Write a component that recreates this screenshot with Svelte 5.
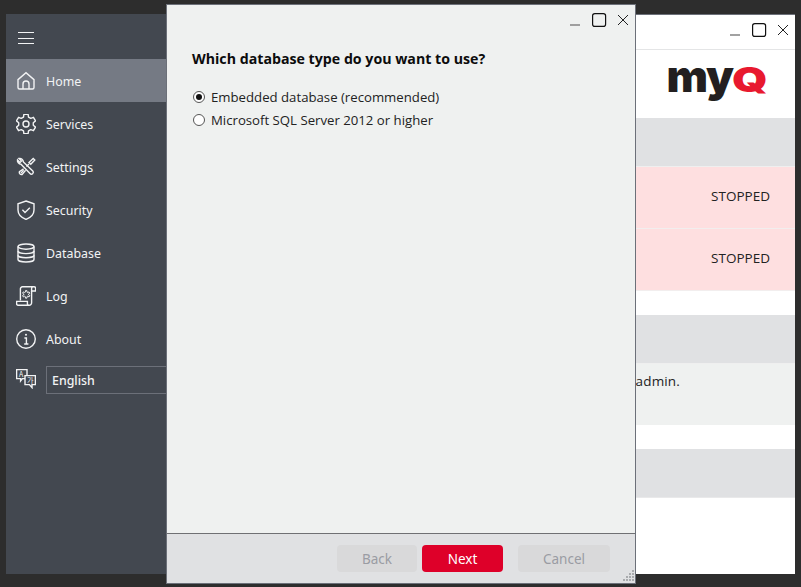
<script>
  const navItems = ['Home', 'Services', 'Settings', 'Security', 'Database', 'Log', 'About'];

  function gearPath(cx, cy, outer, inner, teeth) {
    const pts = [];
    const step = (Math.PI * 2) / teeth;
    for (let i = 0; i < teeth; i++) {
      const a = i * step - Math.PI / 2;
      const hw = step * 0.2;
      const valley = step * 0.33;
      const p = (r, t) => `${(cx + r * Math.cos(t)).toFixed(2)} ${(cy + r * Math.sin(t)).toFixed(2)}`;
      pts.push(p(inner, a - valley), p(outer, a - hw), p(outer, a + hw), p(inner, a + valley));
    }
    return 'M' + pts.join(' L') + ' Z';
  }
  const bigGear = gearPath(10, 10, 10, 7.4, 6);
  const smallGear = gearPath(10.2, 8.4, 3.8, 2.4, 6);
  const grip = [[10,0],[10,3],[7,3],[10,6],[7,6],[4,6],[10,9],[7,9],[4,9],[1,9]];
</script>

{#snippet windowControls()}
  <svg class="controls" viewBox="0 0 58 14" width="58" height="14" aria-hidden="true">
    <path d="M0 12H10" stroke="#8b8b8b" stroke-width="1.6" fill="none" />
    <rect x="22.6" y="0.6" width="13" height="12.8" rx="2.2" fill="none" stroke="#111" stroke-width="1.2" />
    <path d="M48 2L58 12M58 2L48 12" stroke="#222" stroke-width="1" fill="none" />
  </svg>
{/snippet}

{#snippet navIcon(name)}
  <svg class="icon" viewBox="0 0 20 20" width="20" height="20" aria-hidden="true">
    {#if name === 'Home'}
      <path d="M2 16.5V8.6L10 1.6L18 8.6V16.5A1.5 1.5 0 0 1 16.5 18H3.5A1.5 1.5 0 0 1 2 16.5Z" />
      <path d="M7 18V13A3 3 0 0 1 13 13V18" />
    {:else if name === 'Services'}
      <path d={bigGear} stroke-linejoin="round" />
      <circle cx="10" cy="10" r="3" />
    {:else if name === 'Settings'}
      <path d="M3 1.5L5.5 4L4 5.5L1.5 3A3.6 3.6 0 0 0 5 7.2L14 16.5A1.8 1.8 0 0 0 16.8 14L7.4 5A3.6 3.6 0 0 0 3 1.5Z" />
      <path d="M17.2 1.4L18.8 3L14.8 7.2L13 5.4Z" />
      <path d="M13 7L10.4 9.6M7.6 11.8L3.4 14.6A2.3 2.3 0 0 0 6 17.6L9.6 13.2" />
      <path d="M4.8 16.4L7.6 13.2" />
    {:else if name === 'Security'}
      <path d="M10 1L18 3.8V10C18 14.6 14.6 17.6 10 19.4C5.4 17.6 2 14.6 2 10V3.8Z" />
      <path d="M6.4 9.8L9 12.4L13.8 7.8" />
    {:else if name === 'Database'}
      <ellipse cx="10" cy="3.6" rx="8" ry="2.6" />
      <path d="M2 3.6V16.4C2 17.8 5.6 19 10 19S18 17.8 18 16.4V3.6" />
      <path d="M2 8C2 9.4 5.6 10.6 10 10.6S18 9.4 18 8" />
      <path d="M2 12.2C2 13.6 5.6 14.8 10 14.8S18 13.6 18 12.2" />
    {:else if name === 'Log'}
      <path d="M4.4 14.5V2.8A2 2 0 0 1 6.4 0.8H18A1.6 1.6 0 0 1 19.6 2.4V5H15.6V2.4A1.6 1.6 0 0 1 17.2 0.8" />
      <path d="M15.6 5V16.8A2.4 2.4 0 0 1 13.2 19.2H2A1.4 1.4 0 0 1 0.6 17.8V15.4H11.4V17.8A1.4 1.4 0 0 0 12.8 19.2" />
      <path d={smallGear} stroke-width="1" />
    {:else if name === 'About'}
      <circle cx="10" cy="10" r="9.3" />
      <circle class="solid" cx="10" cy="5.8" r="1" />
      <path d="M8.4 9H10.4V15M8.2 15H12.4" />
    {/if}
  </svg>
{/snippet}

<div class="desktop">
  <div class="app-window">
    <aside class="sidebar">
      <div class="burger" aria-hidden="true"><span></span><span></span><span></span></div>
      <nav>
        {#each navItems as item}
          <div class="nav-item" class:active={item === 'Home'}>
            {@render navIcon(item)}
            <span class="nav-label">{item}</span>
          </div>
        {/each}
      </nav>
      <div class="lang">
        <svg class="icon lang-icon" viewBox="0 0 20 20" width="20" height="20" aria-hidden="true">
          <path d="M0.6 0.6H11V9.6H6.4L4.6 12V9.6H0.6Z" />
          <path d="M9 6.6H19.4V15.6H16V18.6L13.4 15.6H9Z" class="filled" />
          <text x="3" y="7.6" class="tiny">A</text>
          <text x="11" y="13.6" class="tiny">가</text>
        </svg>
        <div class="select">English</div>
      </div>
    </aside>

    <main class="content">
      <div class="titlebar back-title">{@render windowControls()}</div>
      <div class="logo-row">
        <div class="logo"><span class="my">my</span><span class="q">Q</span></div>
      </div>
      <div class="row band"></div>
      <div class="row status"><span>STOPPED</span></div>
      <div class="row status"><span>STOPPED</span></div>
      <div class="spacer"></div>
      <div class="row band"></div>
      <div class="row note">/admin.</div>
      <div class="spacer"></div>
      <div class="row band last"></div>
    </main>
  </div>

  <section class="dialog">
    <div class="titlebar">{@render windowControls()}</div>
    <div class="dialog-body">
      <h1>Which database type do you want to use?</h1>
      <label class="radio"><span class="dot checked"></span>Embedded database (recommended)</label>
      <label class="radio"><span class="dot"></span>Microsoft SQL Server 2012 or higher</label>
    </div>
    <footer>
      <button class="btn back" disabled>Back</button>
      <button class="btn next">Next</button>
      <button class="btn cancel" disabled>Cancel</button>
      <svg class="grip" viewBox="0 0 12 12" width="12" height="12" aria-hidden="true">
        {#each grip as g}
          <rect x={g[0]} y={g[1]} width="2" height="2" fill="#a9abae" />
        {/each}
      </svg>
    </footer>
  </section>
</div>

<style>
  :global(body) {
    margin: 0;
    background: #2d2d2d;
  }
  .desktop {
    position: relative;
    width: 801px;
    height: 587px;
    overflow: hidden;
    background: #2d2d2d;
    font-family: "Open Sans", "Noto Sans", sans-serif;
  }
  .app-window {
    display: flex;
    box-sizing: border-box;
    width: 789px;
    height: 560px;
    margin-left: 6px;
    position: relative;
    top: 14px;
  }
  .sidebar {
    width: 160px;
    flex: none;
    background: #434850;
    color: #f2f3f4;
    font-family: "Noto Sans", "Open Sans", sans-serif;
    font-size: 12.4px;
    overflow: hidden;
  }
  .burger {
    height: 45px;
    display: flex;
    flex-direction: column;
    gap: 4.5px;
    padding: 18px 0 0 12px;
    box-sizing: border-box;
  }
  .burger span {
    display: block;
    width: 16px;
    height: 1px;
    background: #f2f3f4;
  }
  .nav-item {
    height: 43px;
    display: flex;
    align-items: center;
    gap: 10px;
    padding-left: 10px;
  }
  .nav-item.active {
    background: #757a84;
  }
  .nav-label {
    padding-top: 2px;
  }
  .icon {
    flex: none;
    fill: none;
    stroke: #f2f3f4;
    stroke-width: 1.4;
  }
  .icon .solid {
    fill: #f2f3f4;
    stroke: none;
  }
  .tiny {
    font-size: 7px;
    fill: #f2f3f4;
    stroke: none;
    font-family: "Noto Sans CJK KR", "Noto Sans", sans-serif;
  }
  .filled {
    fill: #434850;
  }
  .lang {
    display: flex;
    align-items: center;
    gap: 10px;
    padding-left: 10px;
    margin-top: 6px;
  }
  .lang-icon {
    margin-top: -3px;
  }
  .select {
    flex: 1;
    height: 28px;
    box-sizing: border-box;
    border: 1px solid #6c7079;
    padding-left: 5px;
    line-height: 28px;
    margin-right: -4px;
    font-weight: 500;
  }
  .content {
    flex: 1;
    background: #fff;
    border-top: 1px solid #6c7079;
    display: flex;
    flex-direction: column;
    font-size: 13.5px;
    color: #222;
  }
  .titlebar {
    height: 34px;
    box-sizing: border-box;
    padding: 8px 7px 0 0;
    display: flex;
    justify-content: flex-end;
  }
  .back-title {
    height: 35px;
    border-bottom: 1px solid #e4e5e6;
  }
  .controls {
    display: block;
  }
  .logo-row {
    height: 68px;
    display: flex;
    justify-content: flex-end;
    padding-right: 29px;
    box-sizing: border-box;
  }
  .logo {
    font-family: Inter, "Open Sans", sans-serif;
    font-weight: 900;
    line-height: 1;
    display: flex;
    align-items: baseline;
    height: 48px;
    padding-top: 4px;
  }
  .my {
    font-size: 44px;
    letter-spacing: -1px;
    color: #231f20;
  }
  .q {
    font-size: 34px;
    color: #e8192f;
    display: inline-block;
    transform: scaleX(1.33);
    transform-origin: left;
    width: 34px;
    margin-left: -1px;
  }
  .row {
    box-sizing: border-box;
  }
  .band {
    height: 49px;
    background: #e0e1e3;
    border-bottom: 1px solid #efefef;
  }
  .band.last {
    border-bottom-color: #e9e9ea;
  }
  .status {
    height: 62px;
    background: #fedfe0;
    border-bottom: 1px solid #f2eeee;
    display: flex;
    align-items: center;
    justify-content: flex-end;
    padding: 0 25px 4px 0;
  }
  .spacer {
    height: 24px;
    flex: none;
  }
  .note {
    height: 61px;
    background: #eff1f0;
    text-align: right;
    padding: 7px 115px 0 0;
    line-height: 20px;
    letter-spacing: 0.15px;
  }
  .dialog {
    position: absolute;
    left: 166px;
    top: 4px;
    width: 470px;
    height: 580px;
    box-sizing: border-box;
    border: 1px solid #6c7079;
    background: #eff1f0;
    display: flex;
    flex-direction: column;
  }
  .dialog-body {
    flex: 1;
    padding: 10px 25px 0;
  }
  h1 {
    margin: 0 0 16px;
    font-size: 14.2px;
    line-height: 20px;
    font-weight: 700;
    color: #0c0c0c;
  }
  .radio {
    display: flex;
    align-items: center;
    gap: 6px;
    height: 23px;
    font-size: 13.2px;
    color: #222;
    padding-left: 1px;
  }
  .dot {
    width: 12px;
    height: 12px;
    box-sizing: border-box;
    border: 1px solid #555;
    border-radius: 50%;
    background: #fff;
    flex: none;
    display: flex;
    align-items: center;
    justify-content: center;
  }
  .dot.checked::after {
    content: "";
    width: 6px;
    height: 6px;
    border-radius: 50%;
    background: #111;
  }
  footer {
    position: relative;
    height: 50px;
    box-sizing: border-box;
    border-top: 1px solid #6f7073;
    background: #e0e1e3;
    display: flex;
    align-items: flex-start;
    padding: 11px 0 0 170px;
  }
  .btn {
    height: 27px;
    box-sizing: border-box;
    border: none;
    border-radius: 4px;
    padding: 1px 0 0;
    font-family: "Noto Sans", "Open Sans", sans-serif;
    font-size: 13.5px;
    line-height: 26px;
  }
  .back {
    width: 80px;
    background: #d9d9da;
    color: #9a9ca3;
  }
  .next {
    width: 81px;
    margin-left: 5px;
    background: #de0029;
    color: #fff;
  }
  .cancel {
    width: 92px;
    margin-left: 15px;
    background: #d9d9da;
    color: #9a9ca3;
  }
  .grip {
    position: absolute;
    right: 1px;
    bottom: 1px;
  }
</style>
